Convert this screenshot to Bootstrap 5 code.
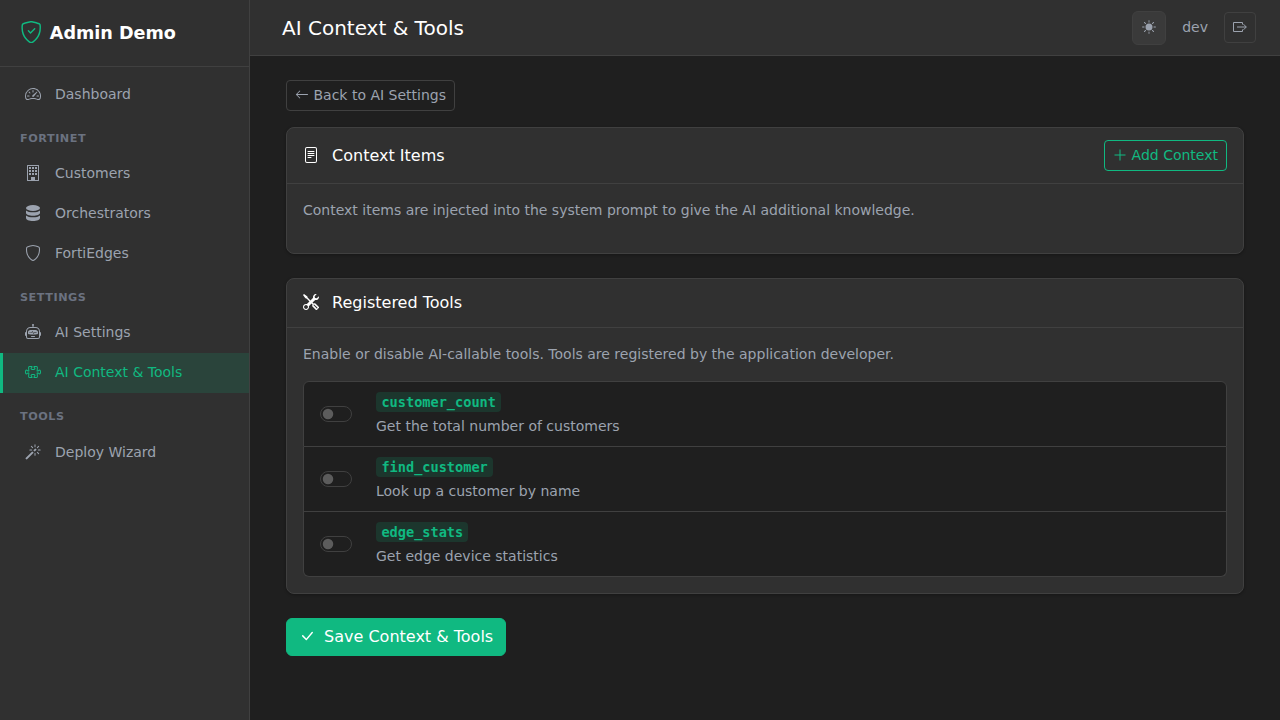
<!DOCTYPE html>
<html lang="en" data-bs-theme="dark">
<head>
<meta charset="utf-8">
<meta name="viewport" content="width=device-width, initial-scale=1">
<title>AI Context &amp; Tools</title>
<link href="https://cdn.jsdelivr.net/npm/bootstrap@5.3.0/dist/css/bootstrap.min.css" rel="stylesheet">
<script src="https://cdn.jsdelivr.net/npm/bootstrap@5.3.0/dist/js/bootstrap.bundle.min.js"></script>
<style>
:root{--accent:#10b981;--surface:#303030;--base:#1f1f1f;--line:#404040;--soft:#9ca3af;--dim:#6b7280}
body{font-family:"DejaVu Sans",sans-serif;background:var(--base);color:#fff}
.ic{width:1em;height:1em;fill:currentColor;vertical-align:-.125em;flex:none}
.ic-line{fill:none;stroke:currentColor}
.sidebar{width:250px;background:var(--surface);border-right:1px solid var(--line)}
.brand{height:67px;padding:0 20px;gap:7.4px;border-bottom:1px solid var(--line);font-size:17.6px;font-weight:700}
.brand .ic{font-size:22.4px;margin-bottom:2px;color:var(--accent)}
.side-nav{padding-top:7.4px}
.side-item{height:40px;padding:0 20px;border-left:3px solid transparent;color:var(--soft);text-decoration:none;font-size:14px;gap:12px}
.side-item .ic{font-size:16px;margin:0 2px 1.4px}
.side-item.active{background:rgba(16,185,129,.15);border-left-color:var(--accent);color:var(--accent)}
.side-label{height:39.2px;padding:16px 20px 0;font-size:11.2px;line-height:16.8px;font-weight:700;letter-spacing:.56px;color:var(--dim)}
.side-label:first-of-type{padding-top:16.6px}
.side-label:last-of-type{height:39.8px}
.topbar{height:56px;padding:0 24px 0 32px;background:var(--surface);border-bottom:1px solid var(--line)}
.topbar h1{font-size:20px;font-weight:400}
.theme-btn{width:34px;height:34px;padding:0 1px 1px 0;background:#3a3a3a;border:1px solid var(--line);border-radius:6px;color:var(--soft);font-size:14px}
.btn-line{--bs-btn-color:var(--soft);--bs-btn-border-color:var(--line)}
.btn-accent-line{--bs-btn-color:var(--accent);--bs-btn-border-color:var(--accent)}
.btn-accent{--bs-btn-color:#fff;--bs-btn-bg:var(--accent);--bs-btn-border-color:var(--accent)}
.btn-sm{--bs-btn-border-radius:4px;--bs-btn-border-width:1px;line-height:21px}
.content{padding:24px 36px}
.card{--bs-card-bg:var(--surface);--bs-card-border-color:var(--line);--bs-card-cap-bg:transparent;--bs-card-cap-padding-y:12px;--bs-card-border-radius:8px;--bs-card-inner-border-radius:7px;box-shadow:0 1px 3px rgba(0,0,0,.3)}
.card h2{font-size:16px;font-weight:400;line-height:24px}
.soft{color:var(--soft);font-size:14px}
.list-group{--bs-list-group-bg:var(--base);--bs-list-group-border-color:var(--line)}
.list-group-item code{font-family:"DejaVu Sans Mono",monospace;font-size:13.6px;line-height:16px;font-weight:700;color:var(--accent);background:rgba(16,185,129,.15);padding:2px 5.2px 2px 5.4px;border-radius:4px}
.tool-line{height:24px;line-height:24px}
.form-switch{min-height:0;padding:0}
.form-switch .form-check-input{width:32px;height:16px;margin:0;float:none;display:block;background-color:var(--base);border-color:var(--line);background-image:url("data:image/svg+xml,%3csvg xmlns='http://www.w3.org/2000/svg' viewBox='-4 -4 8 8'%3e%3ccircle r='3' fill='%235c5c5c'/%3e%3c/svg%3e")}
</style>
</head>
<body class="vh-100 overflow-hidden">
<div class="d-flex vh-100">
  <aside class="sidebar d-flex flex-column flex-shrink-0">
    <div class="brand d-flex align-items-center">
      <svg class="ic" viewBox="0 0 16 16"><path d="M5.338 1.59a61.44 61.44 0 0 0-2.837.856.481.481 0 0 0-.328.39c-.554 4.157.726 7.19 2.253 9.188a10.725 10.725 0 0 0 2.287 2.233c.346.244.652.42.893.533.12.057.218.095.293.118a.55.55 0 0 0 .101.025.615.615 0 0 0 .1-.025c.076-.023.174-.061.294-.118.24-.113.547-.29.893-.533a10.726 10.726 0 0 0 2.287-2.233c1.527-1.997 2.807-5.031 2.253-9.188a.48.48 0 0 0-.328-.39c-.651-.213-1.75-.56-2.837-.855C9.552 1.29 8.531 1.067 8 1.067c-.53 0-1.552.223-2.662.524zM5.072.56C6.157.265 7.31 0 8 0s1.843.265 2.928.56c1.11.3 2.229.655 2.887.87a1.54 1.54 0 0 1 1.044 1.262c.596 4.477-.787 7.795-2.465 9.99a11.775 11.775 0 0 1-2.517 2.453 7.159 7.159 0 0 1-1.048.625c-.28.132-.581.24-.829.24s-.548-.108-.829-.24a7.158 7.158 0 0 1-1.048-.625 11.777 11.777 0 0 1-2.517-2.453C1.928 10.487.545 7.169 1.141 2.692A1.54 1.54 0 0 1 2.185 1.43 62.456 62.456 0 0 1 5.072.56z"/><path d="M10.854 5.146a.5.5 0 0 1 0 .708l-3 3a.5.5 0 0 1-.708 0l-1.5-1.5a.5.5 0 1 1 .708-.708L7.5 7.793l2.646-2.647a.5.5 0 0 1 .708 0z"/></svg>
      <span>Admin Demo</span>
    </div>
    <nav class="side-nav">
      <a href="#" class="side-item d-flex align-items-center"><svg class="ic" viewBox="0 0 16 16"><path d="M8 4a.5.5 0 0 1 .5.5V6a.5.5 0 0 1-1 0V4.5A.5.5 0 0 1 8 4zM3.732 5.732a.5.5 0 0 1 .707 0l.915.914a.5.5 0 1 1-.708.708l-.914-.915a.5.5 0 0 1 0-.707zM2 10a.5.5 0 0 1 .5-.5h1.586a.5.5 0 0 1 0 1H2.5A.5.5 0 0 1 2 10zm9.5 0a.5.5 0 0 1 .5-.5h1.5a.5.5 0 0 1 0 1H12a.5.5 0 0 1-.5-.5zm.754-4.246a.389.389 0 0 0-.527-.02L7.547 9.31a.91.91 0 1 0 1.302 1.258l3.434-4.297a.389.389 0 0 0-.029-.518z"/><path fill-rule="evenodd" d="M0 10a8 8 0 1 1 15.547 2.661c-.442 1.253-1.845 1.602-2.932 1.25C11.309 13.488 9.475 13 8 13c-1.474 0-3.31.488-4.615.911-1.087.352-2.49.003-2.932-1.25A7.988 7.988 0 0 1 0 10zm8-7a7 7 0 0 0-6.603 9.329c.203.575.923.876 1.68.63C4.397 12.533 6.358 12 8 12s3.604.532 4.923.96c.757.245 1.477-.056 1.68-.631A7 7 0 0 0 8 3z"/></svg><span>Dashboard</span></a>
      <div class="side-label">FORTINET</div>
      <a href="#" class="side-item d-flex align-items-center"><svg class="ic" viewBox="0 0 16 16"><path fill-rule="evenodd" d="M2 .5A.5.5 0 0 1 2.500 0h11a.5.5 0 0 1 .5.5v15a.5.5 0 0 1-.5.5h-11a.5.5 0 0 1-.5-.5ZM3 1v14h3v-3h4v3h3V1ZM4 2h2v2H4Zm3 0h2v2H7Zm3 0h2v2h-2ZM4 5h2v2H4Zm3 0h2v2H7Zm3 0h2v2h-2ZM4 8h2v2H4Zm3 0h2v2H7Zm3 0h2v2h-2Z"/><path d="M6 12h4v3H6Z"/></svg><span>Customers</span></a>
      <a href="#" class="side-item d-flex align-items-center"><svg class="ic" viewBox="0 0 16 16"><ellipse cx="8" cy="3" rx="7" ry="3"/><path d="M1 5.500C2.500 6.800 5 7.300 8 7.300s5.500-.5 7-1.800V8c0 1.500-3 2.700-7 2.700S1 9.500 1 8Z"/><path d="M1 10.500c1.500 1.300 4 1.800 7 1.800s5.500-.5 7-1.800V13c0 1.700-3 3-7 3s-7-1.300-7-3Z"/></svg><span>Orchestrators</span></a>
      <a href="#" class="side-item d-flex align-items-center"><svg class="ic" viewBox="0 0 16 16"><path d="M5.338 1.59a61.44 61.44 0 0 0-2.837.856.481.481 0 0 0-.328.39c-.554 4.157.726 7.19 2.253 9.188a10.725 10.725 0 0 0 2.287 2.233c.346.244.652.42.893.533.12.057.218.095.293.118a.55.55 0 0 0 .101.025.615.615 0 0 0 .1-.025c.076-.023.174-.061.294-.118.24-.113.547-.29.893-.533a10.726 10.726 0 0 0 2.287-2.233c1.527-1.997 2.807-5.031 2.253-9.188a.48.48 0 0 0-.328-.39c-.651-.213-1.75-.56-2.837-.855C9.552 1.29 8.531 1.067 8 1.067c-.53 0-1.552.223-2.662.524zM5.072.56C6.157.265 7.31 0 8 0s1.843.265 2.928.56c1.11.3 2.229.655 2.887.87a1.54 1.54 0 0 1 1.044 1.262c.596 4.477-.787 7.795-2.465 9.99a11.775 11.775 0 0 1-2.517 2.453 7.159 7.159 0 0 1-1.048.625c-.28.132-.581.24-.829.24s-.548-.108-.829-.24a7.158 7.158 0 0 1-1.048-.625 11.777 11.777 0 0 1-2.517-2.453C1.928 10.487.545 7.169 1.141 2.692A1.54 1.54 0 0 1 2.185 1.43 62.456 62.456 0 0 1 5.072.56z"/></svg><span>FortiEdges</span></a>
      <div class="side-label">SETTINGS</div>
      <a href="#" class="side-item d-flex align-items-center"><svg class="ic" viewBox="0 0 16 16"><path d="M6 12.5a.5.5 0 0 1 .5-.5h3a.5.5 0 0 1 0 1h-3a.5.5 0 0 1-.5-.5ZM3 8.062C3 6.76 4.235 5.765 5.53 5.886a26.58 26.58 0 0 0 4.94 0C11.765 5.765 13 6.76 13 8.062v1.157a.933.933 0 0 1-.765.935c-.845.147-2.34.346-4.235.346-1.895 0-3.39-.2-4.235-.346A.933.933 0 0 1 3 9.219V8.062Zm4.542-.827a.25.25 0 0 0-.217.068l-.92.9a24.767 24.767 0 0 1-1.871-.183.25.25 0 0 0-.068.495c.55.076 1.232.149 2.02.193a.25.25 0 0 0 .189-.071l.754-.736.847 1.71a.25.25 0 0 0 .404.062l.932-.97a25.286 25.286 0 0 0 1.922-.188.25.25 0 0 0-.068-.495c-.538.074-1.207.145-1.980.189a.25.25 0 0 0-.166.076l-.754.785-.842-1.7a.25.25 0 0 0-.182-.135Z"/><path d="M8.5 1.866a1 1 0 1 0-1 0V3h-2A4.5 4.5 0 0 0 1 7.5V8a1 1 0 0 0-1 1v2a1 1 0 0 0 1 1v1a2 2 0 0 0 2 2h10a2 2 0 0 0 2-2v-1a1 1 0 0 0 1-1V9a1 1 0 0 0-1-1v-.5A4.5 4.5 0 0 0 10.500 3h-2V1.866ZM14 7.500V13a1 1 0 0 1-1 1H3a1 1 0 0 1-1-1V7.500A3.500 3.500 0 0 1 5.500 4h5A3.500 3.500 0 0 1 14 7.500Z"/></svg><span>AI Settings</span></a>
      <a href="#" class="side-item active d-flex align-items-center"><svg class="ic" viewBox="0 0 16 16"><path d="M3.112 3.645A1.5 1.5 0 0 1 4.605 2H7a.5.5 0 0 1 .5.5v.382c0 .696-.497 1.182-.872 1.469a.459.459 0 0 0-.115.118.113.113 0 0 0-.012.025L6.5 4.5v.003l.003.01c.004.01.014.028.036.053a.86.86 0 0 0 .27.194C7.09 4.9 7.51 5 8 5c.492 0 .912-.1 1.19-.24a.86.86 0 0 0 .271-.194.213.213 0 0 0 .039-.063v-.009a.112.112 0 0 0-.012-.025.459.459 0 0 0-.115-.118c-.375-.287-.872-.773-.872-1.469V2.5A.5.5 0 0 1 9 2h2.395a1.5 1.5 0 0 1 1.493 1.645L12.645 6.5h.237c.195 0 .42-.147.675-.48.21-.274.528-.52.943-.52.568 0 .947.447 1.154.862C15.877 6.807 16 7.387 16 8s-.123 1.193-.346 1.638c-.207.415-.586.862-1.154.862-.415 0-.733-.246-.943-.52-.255-.333-.48-.48-.675-.48h-.237l.243 2.855A1.5 1.5 0 0 1 11.395 14H9a.5.5 0 0 1-.5-.5v-.382c0-.696.497-1.182.872-1.469a.459.459 0 0 0 .115-.118.113.113 0 0 0 .012-.025L9.5 11.5v-.003a.214.214 0 0 0-.039-.064.859.859 0 0 0-.27-.193C8.91 11.1 8.49 11 8 11c-.491 0-.912.1-1.19.24a.859.859 0 0 0-.271.194.214.214 0 0 0-.039.063v.003l.001.006a.113.113 0 0 0 .012.025c.016.027.05.068.115.118.375.287.872.773.872 1.469v.382a.5.5 0 0 1-.5.5H4.605a1.5 1.5 0 0 1-1.493-1.645L3.356 9.5h-.238c-.195 0-.42.147-.675.48-.21.274-.528.52-.943.52-.568 0-.947-.447-1.154-.862C.123 9.193 0 8.613 0 8s.123-1.193.346-1.638C.553 5.947.932 5.5 1.5 5.5c.415 0 .733.246.943.52.255.333.48.48.675.48h.238l-.244-2.855zM4.605 3a.5.5 0 0 0-.498.55l.001.007.29 3.4A.5.5 0 0 1 3.9 7.5h-.782c-.696 0-1.182-.497-1.469-.872a.459.459 0 0 0-.118-.115.112.112 0 0 0-.025-.012L1.5 6.5h-.003a.213.213 0 0 0-.064.039.86.86 0 0 0-.193.27C1.1 7.09 1 7.51 1 8c0 .491.1.912.24 1.19.07.14.14.225.194.271a.213.213 0 0 0 .063.039H1.5l.006-.001a.112.112 0 0 0 .025-.012.459.459 0 0 0 .118-.115c.287-.375.773-.872 1.469-.872H3.9a.5.5 0 0 1 .498.542l-.29 3.408a.5.5 0 0 0 .497.55h1.878c-.048-.166-.195-.352-.463-.557-.274-.21-.52-.528-.52-.943 0-.568.447-.947.862-1.154C6.807 10.123 7.387 10 8 10s1.193.123 1.638.346c.415.207.862.586.862 1.154 0 .415-.246.733-.52.943-.268.205-.415.39-.463.557h1.878a.5.5 0 0 0 .498-.55l-.001-.007-.29-3.4A.5.5 0 0 1 12.1 8.5h.782c.696 0 1.182.497 1.469.872.05.065.091.099.118.115.013.008.021.01.025.012a.02.02 0 0 0 .006.001h.003a.214.214 0 0 0 .064-.039.86.86 0 0 0 .193-.27c.14-.28.24-.7.24-1.191 0-.492-.1-.912-.24-1.19a.86.86 0 0 0-.194-.271.215.215 0 0 0-.063-.039H14.5l-.006.001a.113.113 0 0 0-.025.012.459.459 0 0 0-.118.115c-.287.375-.773.872-1.469.872H12.1a.5.5 0 0 1-.498-.543l.29-3.407a.5.5 0 0 0-.497-.55H9.517c.048.166.195.352.463.557.274.21.52.528.52.943 0 .568-.447.947-.862 1.154C9.193 5.877 8.613 6 8 6s-1.193-.123-1.638-.346C5.947 5.447 5.5 5.068 5.5 4.5c0-.415.246-.733.52-.943.268-.205.415-.39.463-.557H4.605z"/></svg><span>AI Context &amp; Tools</span></a>
      <div class="side-label">TOOLS</div>
      <a href="#" class="side-item d-flex align-items-center"><svg class="ic" viewBox="0 0 16 16"><path d="M9.5 2.672a.5.5 0 1 0 1 0V.843a.5.5 0 0 0-1 0v1.829Zm4.5.035A.5.5 0 0 0 13.293 2L12 3.293a.5.5 0 1 0 .707.707L14 2.707ZM7.293 4A.5.5 0 1 0 8 3.293L6.707 2A.5.5 0 0 0 6 2.707L7.293 4Zm-.621 2.5a.5.5 0 1 0 0-1H4.843a.5.5 0 1 0 0 1h1.829Zm8.485 0a.5.5 0 1 0 0-1h-1.829a.5.5 0 0 0 0 1h1.829ZM13.293 10A.5.5 0 1 0 14 9.293L12.707 8a.5.5 0 1 0-.707.707L13.293 10ZM9.5 11.157a.5.5 0 0 0 1 0V9.328a.5.5 0 0 0-1 0v1.829Zm1.854-5.097a.5.5 0 0 0 0-.706l-.708-.708a.5.5 0 0 0-.707 0L8.646 5.94a.5.5 0 0 0 0 .707l.708.708a.5.5 0 0 0 .707 0l1.293-1.293Zm-3 3a.5.5 0 0 0 0-.706l-.708-.708a.5.5 0 0 0-.707 0L.646 13.94a.5.5 0 0 0 0 .707l.707.707a.5.5 0 0 0 .707 0L8.354 9.060Z"/></svg><span>Deploy Wizard</span></a>
    </nav>
  </aside>
  <main class="flex-grow-1">
    <header class="topbar d-flex align-items-center justify-content-between">
      <h1 class="m-0">AI Context &amp; Tools</h1>
      <div class="d-flex align-items-center gap-3">
        <button class="theme-btn d-flex align-items-center justify-content-center" aria-label="Theme"><svg class="ic" viewBox="0 0 16 16"><path d="M8 12a4 4 0 1 0 0-8 4 4 0 0 0 0 8zM8 0a.5.5 0 0 1 .5.5v2a.5.5 0 0 1-1 0v-2A.5.5 0 0 1 8 0zm0 13a.5.5 0 0 1 .5.5v2a.5.5 0 0 1-1 0v-2A.5.5 0 0 1 8 13zm8-5a.5.5 0 0 1-.5.5h-2a.5.5 0 0 1 0-1h2a.5.5 0 0 1 .5.5zM3 8a.5.5 0 0 1-.5.5h-2a.5.5 0 0 1 0-1h2A.5.5 0 0 1 3 8zm10.657-5.657a.5.5 0 0 1 0 .707l-1.414 1.415a.5.5 0 1 1-.707-.708l1.414-1.414a.5.5 0 0 1 .707 0zm-9.193 9.193a.5.5 0 0 1 0 .707L3.050 13.657a.5.5 0 0 1-.707-.707l1.414-1.414a.5.5 0 0 1 .707 0zm9.193 2.121a.5.5 0 0 1-.707 0l-1.414-1.414a.5.5 0 0 1 .707-.707l1.414 1.414a.5.5 0 0 1 0 .707zM4.464 4.465a.5.5 0 0 1-.707 0L2.343 3.050a.5.5 0 1 1 .707-.707l1.414 1.414a.5.5 0 0 1 0 .708z"/></svg></button>
        <span class="soft">dev</span>
        <button class="btn btn-sm btn-line" aria-label="Log out"><svg class="ic ic-line" viewBox="0 0 14 14"><path d="M9.500 4.500v-2h-9v9h9v-2M4 7h9.200M10.500 4.200 13.300 7l-2.800 2.800"/></svg></button>
      </div>
    </header>
    <div class="content">
      <a href="#" class="btn btn-sm btn-line mb-3"><svg class="ic" viewBox="0 0 16 16"><path transform="translate(0 -.6)" d="M15 8a.5.5 0 0 0-.5-.5H2.707l3.147-3.146a.5.5 0 1 0-.708-.708l-4 4a.5.5 0 0 0 0 .708l4 4a.5.5 0 0 0 .708-.708L2.707 8.500H14.500A.5.5 0 0 0 15 8z"/></svg> Back to AI Settings</a>
      <section class="card mb-4">
        <div class="card-header d-flex justify-content-between align-items-center">
          <h2 class="m-0"><svg class="ic me-2" viewBox="0 0 16 16"><path d="M5 4a.5.5 0 0 0 0 1h6a.5.5 0 0 0 0-1H5zm-.5 2.500A.5.5 0 0 1 5 6h6a.5.5 0 0 1 0 1H5a.5.5 0 0 1-.5-.5zM5 8a.5.5 0 0 0 0 1h6a.5.5 0 0 0 0-1H5zm0 2a.5.5 0 0 0 0 1h3a.5.5 0 0 0 0-1H5z"/><path d="M2 2a2 2 0 0 1 2-2h8a2 2 0 0 1 2 2v12a2 2 0 0 1-2 2H4a2 2 0 0 1-2-2V2zm10-1H4a1 1 0 0 0-1 1v12a1 1 0 0 0 1 1h8a1 1 0 0 0 1-1V2a1 1 0 0 0-1-1z"/></svg> Context Items</h2>
          <button class="btn btn-sm btn-accent-line"><svg class="ic" viewBox="0 0 14 14"><path d="M6.500 1.500h1v5h5v1h-5v5h-1v-5h-5v-1h5Z"/></svg> Add Context</button>
        </div>
        <div class="card-body"><p class="soft mb-3">Context items are injected into the system prompt to give the AI additional knowledge.</p></div>
      </section>
      <section class="card mb-4">
        <div class="card-header">
          <h2 class="m-0"><svg class="ic me-2" viewBox="0 0 16 16"><path d="M1 0 0 1l2.200 3.081a1 1 0 0 0 .815.419h.070a1 1 0 0 1 .708.293l2.675 2.675-2.617 2.654A3.003 3.003 0 0 0 0 13a3 3 0 1 0 5.878-.851l2.654-2.617.968.968-.305.914a1 1 0 0 0 .242 1.023l3.270 3.270a.997.997 0 0 0 1.414 0l1.586-1.586a.997.997 0 0 0 0-1.414l-3.270-3.270a1 1 0 0 0-1.023-.242L10.500 9.500l-.960-.960 2.680-2.643A3.005 3.005 0 0 0 16 3c0-.269-.035-.530-.102-.777l-2.140 2.141L12 4l-.364-1.757L13.777.102a3 3 0 0 0-3.675 3.680L7.462 6.460 4.793 3.793a1 1 0 0 1-.293-.707v-.071a1 1 0 0 0-.419-.814L1 0Zm9.646 10.646a.5.5 0 0 1 .708 0l2.914 2.915a.5.5 0 0 1-.707.707l-2.915-2.914a.5.5 0 0 1 0-.708ZM3 11l.471.242.529.026.287.445.445.287.026.529L5 13l-.242.471-.026.529-.445.287-.287.445-.529.026L3 15l-.471-.242L2 14.732l-.287-.445L1.268 14l-.026-.529L1 13l.242-.471.026-.529.445-.287.287-.445.529-.026L3 11Z"/></svg> Registered Tools</h2>
        </div>
        <div class="card-body">
          <p class="soft mb-3">Enable or disable AI-callable tools. Tools are registered by the application developer.</p>
          <div class="list-group">
            <div class="list-group-item d-flex align-items-center gap-4">
              <div class="form-check form-switch m-0"><input class="form-check-input" type="checkbox" aria-label="customer_count"></div>
              <div><div class="tool-line"><code>customer_count</code></div><div class="tool-line soft">Get the total number of customers</div></div>
            </div>
            <div class="list-group-item d-flex align-items-center gap-4">
              <div class="form-check form-switch m-0"><input class="form-check-input" type="checkbox" aria-label="find_customer"></div>
              <div><div class="tool-line"><code>find_customer</code></div><div class="tool-line soft">Look up a customer by name</div></div>
            </div>
            <div class="list-group-item d-flex align-items-center gap-4">
              <div class="form-check form-switch m-0"><input class="form-check-input" type="checkbox" aria-label="edge_stats"></div>
              <div><div class="tool-line"><code>edge_stats</code></div><div class="tool-line soft">Get edge device statistics</div></div>
            </div>
          </div>
        </div>
      </section>
      <button class="btn btn-accent"><svg class="ic me-1" viewBox="0 0 16 16"><path d="M12.736 3.970a.733.733 0 0 1 1.047 0c.286.289.290.756.010 1.050L7.880 12.010a.733.733 0 0 1-1.065.020L3.217 8.384a.757.757 0 0 1 0-1.060.733.733 0 0 1 1.047 0l3.052 3.093 5.400-6.425a.247.247 0 0 1 .020-.022Z"/></svg> Save Context &amp; Tools</button>
    </div>
  </main>
</div>
</body>
</html>
